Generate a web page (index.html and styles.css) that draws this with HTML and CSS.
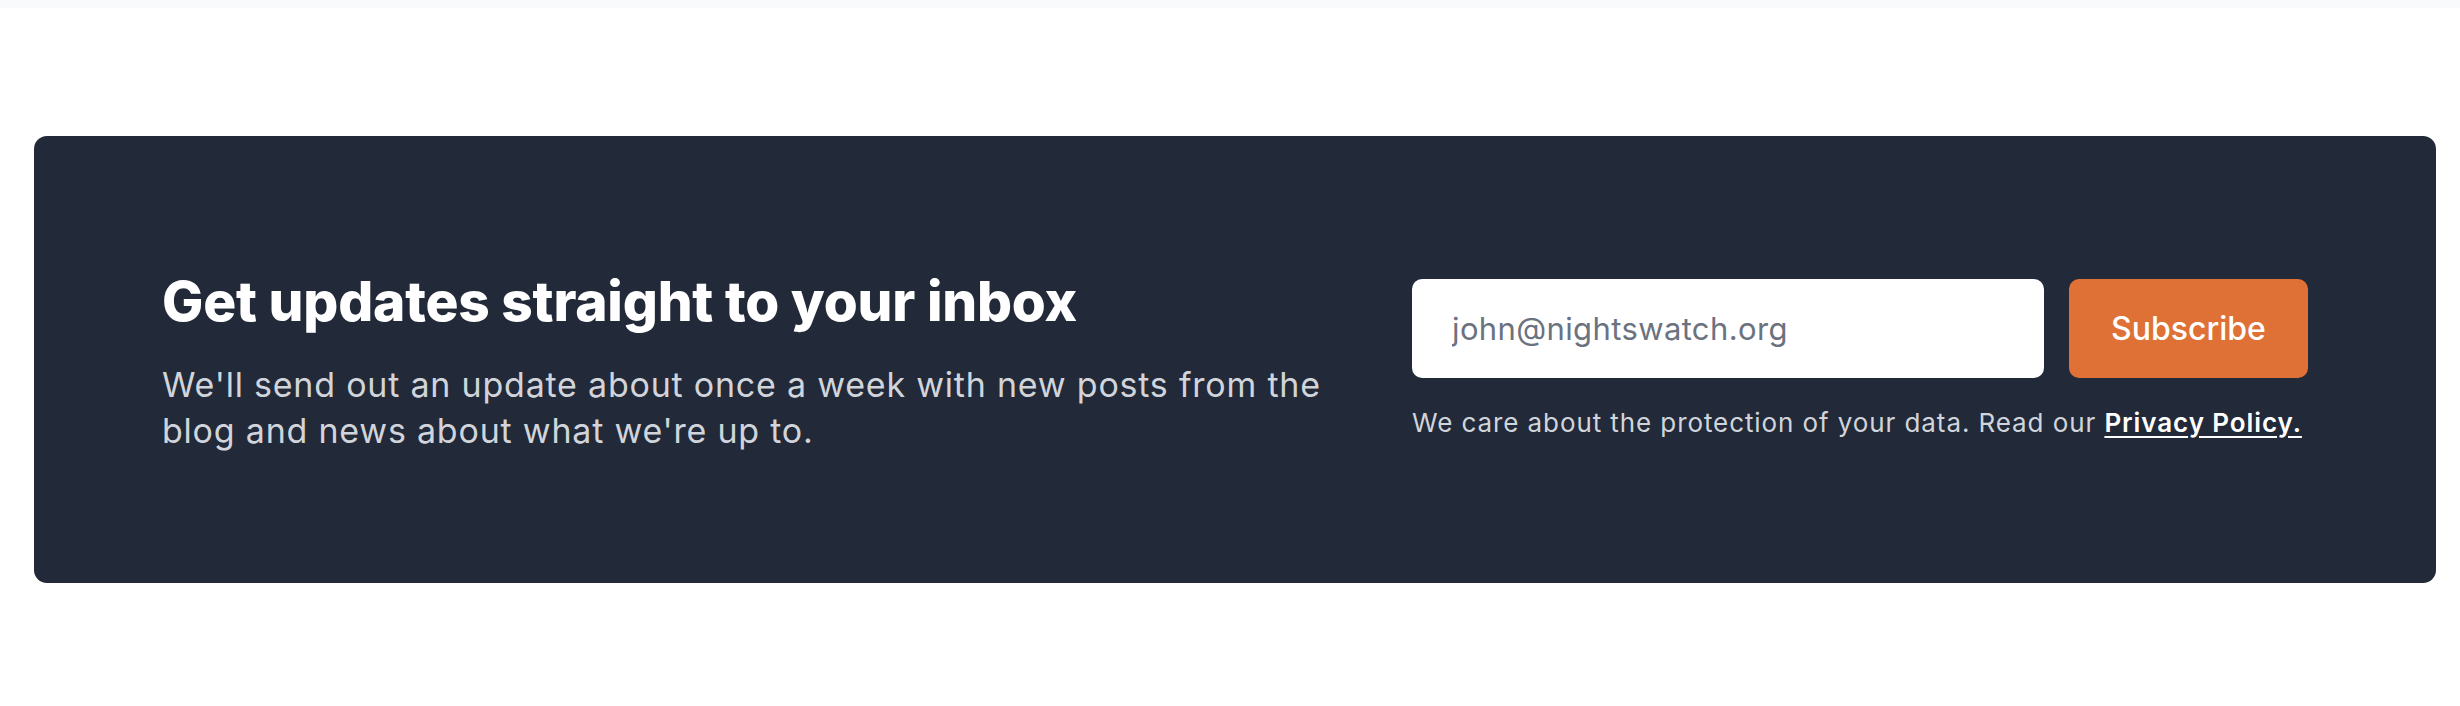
FILE: index.html
```html
<!DOCTYPE html>
<html lang="en">
<head>
<meta charset="utf-8">
<title>Newsletter</title>
<link rel="stylesheet" href="styles.css">
</head>
<body>
<div class="top-strip"></div>
<section class="newsletter">
  <div class="intro">
    <h2 class="title">Get updates straight to your inbox</h2>
    <p class="lead">We'll send out an update about once a week with new posts from the blog and news about what we're up to.</p>
  </div>
  <div class="signup">
    <form class="form">
      <input class="email" type="email" placeholder="john@nightswatch.org">
      <button class="subscribe" type="button">Subscribe</button>
    </form>
    <p class="note">We care about the protection of your data. Read our <a class="policy" href="#">Privacy Policy.</a></p>
  </div>
</section>
</body>
</html>
```
FILE: styles.css
```css
* { box-sizing: border-box; }
html, body { margin: 0; padding: 0; background: #ffffff; }
body { font-family: Inter, "Noto Sans", Arial, sans-serif; width: 2460px; height: 706px; overflow: hidden; }
.top-strip { height: 8px; background: #f9fafb; }
.newsletter {
  margin: 128px 24px 0 34px;
  height: 447px;
  background: #222938;
  border-radius: 13px;
  padding: 0 128px 0 128px;
  display: flex;
  align-items: center;
  justify-content: space-between;
}
.intro { width: 1190px; }
.title {
  margin: 0;
  color: #ffffff;
  font-size: 55px;
  line-height: 71px;
  font-weight: 800;
  letter-spacing: -0.004em;
}
.lead {
  margin: 25px 0 0;
  color: #d1d5db;
  font-size: 34px;
  line-height: 46px;
  letter-spacing: 0.023em;
}
.signup { width: 896px; }
.form { display: flex; gap: 25px; margin: 0; }
.email {
  flex: 1;
  height: 99px;
  border: 0;
  border-radius: 10px;
  background: #ffffff;
  padding: 0 40px;
  font-family: inherit;
  font-size: 31px;
  letter-spacing: 0.012em;
  color: #111827;
  outline: none;
}
.email::placeholder { color: #6b7280; }
.subscribe {
  width: 239px;
  height: 99px;
  border: 0;
  border-radius: 10px;
  background: #df7136;
  color: #ffffff;
  font-family: inherit;
  font-size: 32px;
  font-weight: 500;
}
.note {
  margin: 27px 0 0;
  color: #d1d5db;
  font-size: 26px;
  line-height: 36px;
  letter-spacing: 0.035em;
}
.policy { color: #ffffff; font-weight: 600; text-decoration: underline; text-underline-offset: 4px; }
```
